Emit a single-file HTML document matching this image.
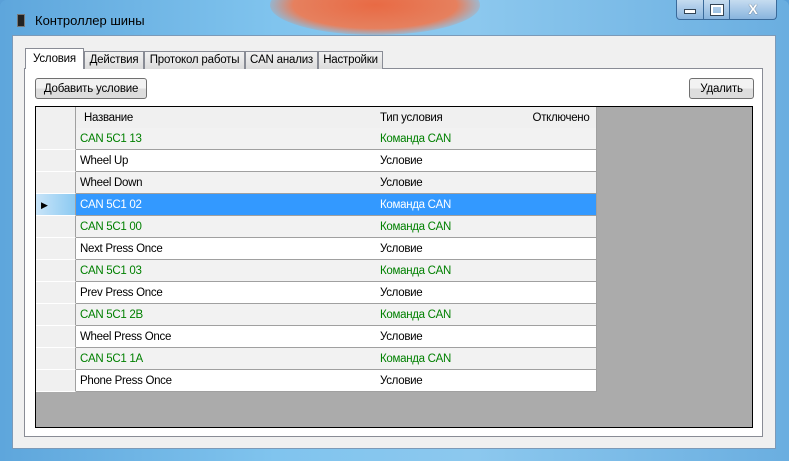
<!DOCTYPE html><html><head><meta charset="utf-8"><style>
body{margin:0;width:789px;height:461px;overflow:hidden;font-family:"Liberation Sans",sans-serif;font-size:12px;background:#5aa0d8;position:relative}
.frame{position:absolute;left:0;top:0;width:789px;height:461px;border-radius:7px 7px 0 0;background:linear-gradient(90deg,#5ea6dc 0%,#80c4ee 35%,#8cc8ee 60%,#6aaee0 100%);}
.blob{position:absolute;left:270px;top:-25px;width:210px;height:60px;border-radius:50%;background:radial-gradient(#e86a44,#e6805e 55%,rgba(230,140,110,0) 75%)}
.title{position:absolute;left:35px;top:13px;font-size:13px;color:#000}
.client{position:absolute;left:12px;top:35px;width:764px;height:414px;background:#f0f0f0;border:1px solid #7c9ab8;box-sizing:border-box}
.page{position:absolute;left:24px;top:68px;width:739px;height:369px;background:#fff;border:1px solid #898c95;box-sizing:border-box}
.tab{position:absolute;top:51px;height:18px;border:1px solid #898c95;border-bottom:none;background:linear-gradient(#f2f2f2,#dcdcdc);box-sizing:border-box;padding:2px 0 0;font-size:11.5px;white-space:nowrap;text-align:center;letter-spacing:-0.2px}
.tab.sel{top:48px;height:21px;background:#fff;padding-top:4px}
.btn{position:absolute;height:21px;border:1px solid #707070;border-radius:3px;background:linear-gradient(#f2f2f2 50%,#dddddd 50%);box-sizing:border-box;text-align:center;line-height:20px;font-size:11.5px;white-space:nowrap;letter-spacing:-0.2px}
.grid{position:absolute;left:35px;top:106px;width:718px;height:322px;background:#ababab;border:1px solid #000;box-sizing:border-box}
.r{position:absolute;left:0;height:22px;width:560px}
.c{position:absolute;top:0;height:21px;line-height:23px;border-right:1px solid #a0a0a0;border-bottom:1px solid #a0a0a0;padding-left:4px;box-sizing:content-box;font-size:11.5px;letter-spacing:-0.3px;white-space:nowrap;overflow:hidden}
.h{position:absolute;top:0;height:21px;line-height:21px;width:39px;left:0;background:#f0f0f0;border-right:1px solid #a0a0a0;border-bottom:1px solid #fff}
.ctrl{position:absolute;top:0;height:20px;border:1px solid #3a6a9a;border-top:none;background:linear-gradient(#c6dcf0,#88b4de);box-sizing:border-box;color:#fff;text-align:center;font-weight:bold}
</style></head><body>
<div class="frame"><div class="blob"></div></div>
<div style="position:absolute;left:17px;top:14px;width:6px;height:11px;background:#222;border:1px solid #777"></div>
<div class="title">Контроллер шины</div>
<div class="ctrl" style="left:676px;width:28px;border-radius:0 0 0 4px"><div style="width:10px;height:3px;background:#fff;border:1px solid #345;margin:9px auto 0"></div></div>
<div class="ctrl" style="left:703px;width:27px"><div style="width:8px;height:6px;border:2px solid #fff;outline:1px solid #345;margin:5px auto 0"></div></div>
<div class="ctrl" style="left:729px;width:48px;border-radius:0 0 4px 0;line-height:18px;font-size:14px;text-shadow:0 0 1px #234">X</div>
<div class="client"></div>
<div class="page"></div>
<div class="tab sel" style="left:25px;width:59px">Условия</div>
<div class="tab" style="left:84px;width:60px">Действия</div>
<div class="tab" style="left:144px;width:101px">Протокол работы</div>
<div class="tab" style="left:245px;width:73px">CAN анализ</div>
<div class="tab" style="left:318px;width:65px">Настройки</div>
<div class="btn" style="left:35px;top:78px;width:112px">Добавить условие</div>
<div class="btn" style="left:689px;top:78px;width:65px">Удалить</div>
<div class="grid">
<div class="r" style="top:0"><div class="h"></div><div class="c" style="left:40px;background:#f0f0f0;border-right-color:#fff;padding-left:8px;width:292px">Название</div><div class="c" style="left:340px;width:146px;background:#f0f0f0;border-right-color:#fff">Тип условия</div><div class="c" style="left:490px;width:70px;padding-left:0;text-align:center;background:#f0f0f0">Отключено</div></div>
<div id="rows"></div>
</div>
<script>
var d=[["CAN 5C1 13",1],["Wheel Up",0],["Wheel Down",0],["CAN 5C1 02",2],["CAN 5C1 00",1],["Next Press Once",0],["CAN 5C1 03",1],["Prev Press Once",0],["CAN 5C1 2B",1],["Wheel Press Once",0],["CAN 5C1 1A",1],["Phone Press Once",0]];
var h="";d.forEach(function(x,i){var t=21+i*22,sel=x[1]==2,bg=sel?"#3399ff":(i%2==0?"#f2f2f2":"#fff"),col=sel?"#fff":(x[1]==1?"#008000":"#000");
h+='<div class="r" style="top:'+t+'px"><div class="h" style="height:21px;'+(sel?'background:linear-gradient(90deg,#c8e4f8,#8ccaf2)':'')+'">'+(sel?'<span style="position:absolute;left:5px;top:1px;font-size:9px;color:#000">&#9654;</span>':'')+'</div><div class="c" style="left:40px;width:296px;background:'+bg+';color:'+col+'">'+x[0]+'</div><div class="c" style="left:340px;width:146px;background:'+bg+';color:'+col+'">'+(x[1]?"Команда CAN":"Условие")+'</div><div class="c" style="left:490px;width:66px;background:'+bg+'"></div></div>';});
document.getElementById("rows").innerHTML=h;
</script>
</body></html>
